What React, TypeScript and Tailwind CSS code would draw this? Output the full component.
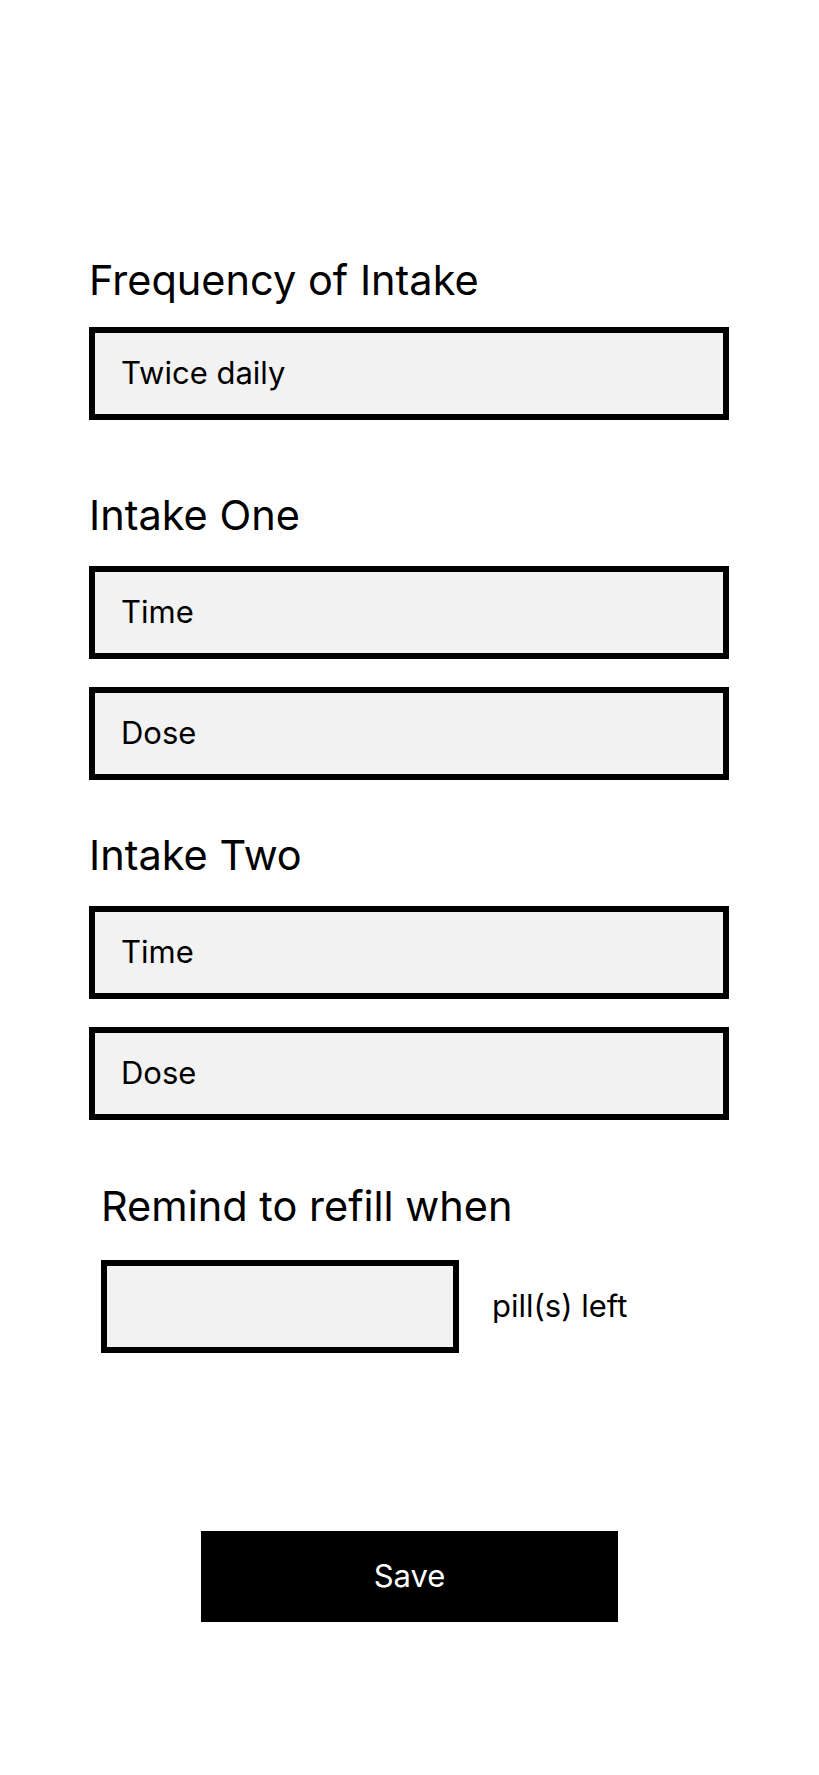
function Field({ label }: { label?: string }) {
  return (
    <div className="flex h-[93px] w-[640px] items-center border-[6px] border-black bg-[#f2f2f2] pl-[26px] text-[31px] text-black">
      {label}
    </div>
  );
}

function Heading({ children }: { children: string }) {
  return <h2 className="text-[41.5px] leading-[48px] text-black">{children}</h2>;
}

export default function App() {
  return (
    <div
      className="min-h-screen bg-white pb-[150px]"
      style={{ fontFamily: "Inter, 'Noto Sans', sans-serif" }}
    >
      <div className="flex flex-col pl-[89px] pt-[256px]">
        <Heading>Frequency of Intake</Heading>
        <div className="mt-[23px]">
          <Field label="Twice daily" />
        </div>

        <div className="mt-[71px]">
          <Heading>Intake One</Heading>
        </div>
        <div className="mt-[27px] flex flex-col gap-[28px]">
          <Field label="Time" />
          <Field label="Dose" />
        </div>

        <div className="mt-[51px]">
          <Heading>Intake Two</Heading>
        </div>
        <div className="mt-[27px] flex flex-col gap-[28px]">
          <Field label="Time" />
          <Field label="Dose" />
        </div>

        <div className="mt-[62px] pl-[12px]">
          <Heading>Remind to refill when</Heading>
          <div className="mt-[30px] flex items-center">
            <div className="h-[93px] w-[358px] border-[6px] border-black bg-[#f2f2f2]" />
            <span className="ml-[33px] text-[31px] text-black">pill(s) left</span>
          </div>
        </div>
      </div>

      <div className="mt-[178px] flex justify-center">
        <button className="h-[91px] w-[417px] bg-black text-[31px] text-white">Save</button>
      </div>
    </div>
  );
}
